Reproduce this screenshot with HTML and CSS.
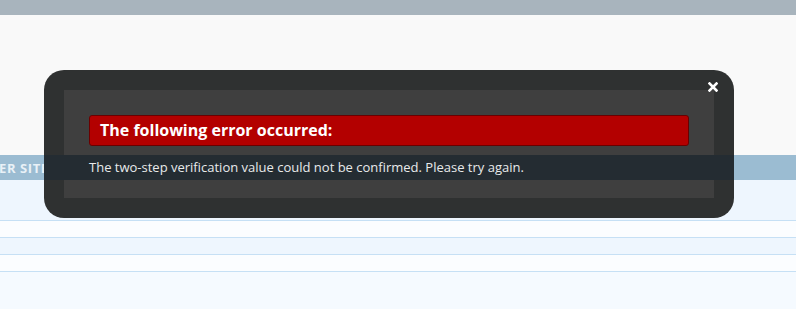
FILE: index.html
```html
<!DOCTYPE html>
<html>
<head>
<meta charset="utf-8">
<link rel="stylesheet" href="styles.css">
</head>
<body>
<div class="page">
  <div class="topbar"></div>
  <div class="hero"></div>
  <div class="bluebar"><span class="bluebar-text">ER SITES</span></div>
  <div class="row row-tall"></div>
  <div class="row"></div>
  <div class="row row-alt"></div>
  <div class="row"></div>
  <div class="rest"></div>

  <div class="modal">
    <span class="close" aria-label="close">
      <svg width="10" height="10" viewBox="0 0 10 10"><path d="M1.5 1.5 L8.5 8.5 M8.5 1.5 L1.5 8.5" stroke="#ffffff" stroke-width="2.6" stroke-linecap="square"/></svg>
    </span>
    <div class="panel">
      <div class="error-title">The following error occurred:</div>
      <div class="message">The two-step verification value could not be confirmed. Please try again.</div>
    </div>
  </div>
</div>
</body>
</html>
```
FILE: styles.css
```css
html, body {
  margin: 0;
  padding: 0;
}
body {
  font-family: "Open Sans", "Liberation Sans", sans-serif;
  background: #f5faff;
  overflow: hidden;
}
.page {
  position: relative;
  width: 796px;
  height: 309px;
  display: flex;
  flex-direction: column;
}
.topbar {
  height: 15px;
  background: #a8b4bd;
}
.hero {
  height: 140px;
  background: #f9f9f9;
}
.bluebar {
  height: 25px;
  background: #9bbcd2;
  display: flex;
  align-items: center;
}
.bluebar-text {
  color: #e9f1f7;
  font-weight: 700;
  font-size: 13px;
  letter-spacing: 0.6px;
  margin-left: -1px;
}
.row {
  height: 16px;
  background: #fbfdff;
  border-bottom: 1px solid #c6e0f5;
}
.row-tall {
  height: 40px;
  background: #eef6fe;
}
.row-alt {
  background: #eef6fe;
}
.rest {
  flex: 1;
  background: #f5faff;
}
.modal {
  position: absolute;
  left: 44px;
  top: 70px;
  width: 650px;
  padding: 20px;
  background: #2f3131;
  border-radius: 20px;
}
.close {
  position: absolute;
  right: 16px;
  top: 12px;
  width: 10px;
  height: 10px;
  display: block;
  line-height: 0;
}
.panel {
  background: #3f3f3f;
  padding: 25px 25px 18px 25px;
}
.error-title {
  height: 29px;
  line-height: 29px;
  background: #b30000;
  border: 1px solid #6a0000;
  border-radius: 3px;
  color: #ffffff;
  font-weight: 700;
  font-size: 16px;
  padding-left: 10px;
}
.message {
  margin: 9px -45px 0 -45px;
  padding-left: 45px;
  height: 25px;
  line-height: 24px;
  background: #242c32;
  color: #e8eaeb;
  font-size: 13px;
}
```
